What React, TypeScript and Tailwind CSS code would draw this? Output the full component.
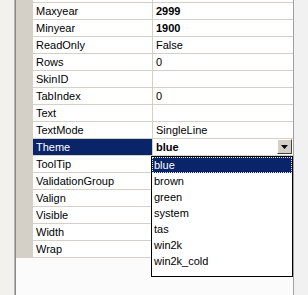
const rows: { name: string; value: string; bold?: boolean }[] = [
  { name: 'Maxyear', value: '2999', bold: true },
  { name: 'Minyear', value: '1900', bold: true },
  { name: 'ReadOnly', value: 'False' },
  { name: 'Rows', value: '0' },
  { name: 'SkinID', value: '' },
  { name: 'TabIndex', value: '0' },
  { name: 'Text', value: '' },
  { name: 'TextMode', value: 'SingleLine' },
  { name: 'Theme', value: 'blue', bold: true },
  { name: 'ToolTip', value: '' },
  { name: 'ValidationGroup', value: '' },
  { name: 'Valign', value: '' },
  { name: 'Visible', value: '' },
  { name: 'Width', value: '' },
  { name: 'Wrap', value: '' },
]

const themes = ['blue', 'brown', 'green', 'system', 'tas', 'win2k', 'win2k_cold']

function ComboButton() {
  return (
    <div className="absolute right-px top-0 w-[15px] h-[15px] bg-[#d4d0c8] border-t border-l border-t-white border-l-white border-r border-b border-r-[#404040] border-b-[#404040] flex items-center justify-center">
      <svg width="7" height="4" viewBox="0 0 7 4">
        <path d="M0 0h7L3.5 4z" fill="#000" />
      </svg>
    </div>
  )
}

export default function App() {
  return (
    <div className="w-[308px] h-[295px] flex overflow-hidden text-[11px] text-black font-['Tahoma','Liberation_Sans',sans-serif]">
      <div className="w-[14px] bg-[#f2f1ee]" />
      <div className="w-px bg-[#b4b4b4]" />
      <div className="w-px bg-[#8a8a8a]" />

      <div className="relative w-[277px] flex flex-col bg-[#fbfbfb]">
        {/* partial row cut off at the top */}
        <div className="flex h-[3px] border-b border-[#d4d0c8]">
          <div className="w-[17px] bg-[#d4d0c8]" />
          <div className="w-[120px] bg-white border-r border-[#d4d0c8]" />
          <div className="flex-1 bg-white" />
        </div>

        {rows.map((r) => {
          const selected = r.name === 'Theme'
          return (
            <div key={r.name} className="flex h-[17px] border-b border-[#d4d0c8]">
              <div className="w-[17px] bg-[#d4d0c8]" />
              <div
                className={
                  selected
                    ? 'w-[120px] pl-[3px] leading-[16px] bg-[#0a246a] text-white border-r border-[#d4d0c8]'
                    : 'w-[120px] pl-[3px] leading-[16px] bg-white border-r border-[#d4d0c8]'
                }
              >
                {r.name}
              </div>
              <div className="relative flex-1 pl-[3px] leading-[16px] bg-white">
                <span className={r.bold ? 'font-bold' : ''}>{r.value}</span>
                {selected && <ComboButton />}
              </div>
            </div>
          )
        })}

        {/* dropdown list for Theme */}
        <div className="absolute left-[135px] top-[156px] w-[142px] h-[121px] bg-white border border-black">
          {themes.map((t, i) => (
            <div
              key={t}
              className={
                i === 0
                  ? 'h-[16px] pl-px leading-[14px] bg-[#0a246a] text-white border border-dotted border-[#e8e8e8]'
                  : 'h-[16px] pl-[2px] leading-[16px]'
              }
            >
              {t}
            </div>
          ))}
        </div>
      </div>

      <div className="w-px bg-[#a0a0a0]" />
      <div className="flex-1 bg-[#f1f1f1]" />
    </div>
  )
}
